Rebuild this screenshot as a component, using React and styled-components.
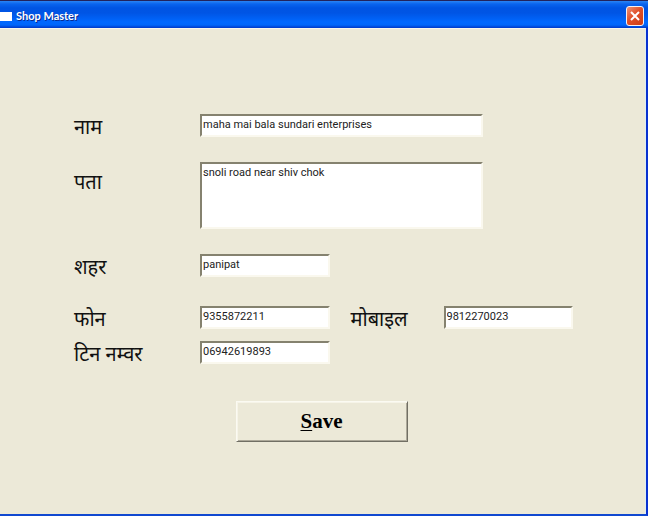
import React from 'react';
import styled, { createGlobalStyle } from 'styled-components';

const GlobalStyle = createGlobalStyle`
  * { box-sizing: border-box; }
  body { margin: 0; background: #ece9d8; }
`;

const Window = styled.div`
  min-height: 100vh;
  display: flex;
  flex-direction: column;
  background: #ece9d8;
  border-right: 2px solid #0831d0;
  border-bottom: 2px solid #1048d0;
`;

const TitleBar = styled.header`
  display: flex;
  align-items: center;
  gap: 4px;
  height: 28px;
  margin-right: -2px;
  padding: 3px 4px 0 0;
  border-top: 1px solid #22225c;
  background: linear-gradient(
    #2a84f4 0,
    #0a64ee 3px,
    #0054e3 7px,
    #0055e5 12px,
    #0068ff 21px,
    #0066fa 24px,
    #0038c8 27px
  );
`;

const WindowIcon = styled.span`
  width: 12px;
  height: 9px;
  background: #fff;
`;

const Title = styled.h1`
  flex: 1;
  margin: 0;
  color: #fff;
  font: bold 11px/16px 'Lato', sans-serif;
  text-shadow: 1px 1px 0 #0a2a90;
`;

const CloseButton = styled.button`
  display: grid;
  place-items: center;
  width: 18px;
  height: 20px;
  padding: 0;
  border: 1px solid #f4f0f4;
  border-radius: 3px;
  background: linear-gradient(135deg, #ee9478, #e0502a 45%, #cc3c14);
`;

const Form = styled.form`
  flex: 1;
  padding: 85px 72px 32px 74px;
  border-top: 1px solid #f8f6ea;
  border-right: 1px solid #dcecf4;
`;

const Fields = styled.div`
  display: grid;
  grid-template-columns: 126px minmax(0, 1fr) 114px minmax(0, 1fr);
  row-gap: 12px;
`;

const Label = styled.label`
  align-self: start;
  height: 23px;
  padding-left: ${(p) => (p.$second ? '21px' : '0')};
  padding-top: ${(p) => (p.$tall ? '12px' : '5px')};
  color: #111;
  font: 20px/20px 'Noto Sans Devanagari', 'Noto Sans', sans-serif;
  white-space: nowrap;
`;

const Spacer = styled.div`
  grid-column: 1 / -1;
  height: ${(p) => (p.$large ? '5px' : '1px')};
`;

const sunken = `
  display: block;
  width: 100%;
  margin: 0;
  border: 2px solid;
  border-color: #85826f #faf8ee #faf8ee #85826f;
  border-radius: 0;
  background: #fff;
  color: #222;
  font: 11px/16px 'Roboto', sans-serif;
  outline: none;
`;

const TextInput = styled.input`
  ${sunken}
  height: 23px;
  padding: 0 1px 2px;
`;

const WideInput = styled(TextInput)`
  grid-column: 2 / -1;
  width: 76%;
`;

const AddressBox = styled.textarea`
  ${sunken}
  grid-column: 2 / -1;
  width: 76%;
  height: 67px;
  padding: 1px;
  resize: none;
`;

const Actions = styled.div`
  display: flex;
  justify-content: center;
  margin-top: 37px;
  padding-right: 4px;
`;

const SaveButton = styled.button`
  width: 172px;
  height: 41px;
  padding: 0 0 2px;
  border: 1px solid;
  border-color: #fbfaf2 #716f64 #716f64 #fbfaf2;
  box-shadow: inset 1px 1px 0 #f6f4e8, inset -1px -1px 0 #aca899;
  background: #ece9d8;
  color: #000;
  font: bold 21px/24px 'Liberation Serif', serif;
`;

const Mnemonic = styled.span`
  text-decoration: underline;
  text-decoration-thickness: 1px;
  text-underline-offset: 2px;
`;

export default function App() {
  return (
    <Window>
      <GlobalStyle />
      <TitleBar>
        <WindowIcon />
        <Title>Shop Master</Title>
        <CloseButton type="button" aria-label="Close">
          <svg width="12" height="12" viewBox="0 0 12 12" aria-hidden="true">
            <path d="M2 2l8 8M10 2l-8 8" stroke="#fff" strokeWidth="2" fill="none" />
          </svg>
        </CloseButton>
      </TitleBar>
      <Form onSubmit={(e) => e.preventDefault()}>
        <Fields>
          <Label htmlFor="name">नाम</Label>
          <WideInput id="name" defaultValue="maha mai bala sundari enterprises" />
          <Spacer />
          <Label htmlFor="address" $tall>पता</Label>
          <AddressBox id="address" defaultValue="snoli road near shiv chok" />
          <Spacer />
          <Label htmlFor="city">शहर</Label>
          <TextInput id="city" defaultValue="panipat" />
          <Spacer $large />
          <Label htmlFor="phone">फोन</Label>
          <TextInput id="phone" defaultValue="9355872211" />
          <Label htmlFor="mobile" $second>मोबाइल</Label>
          <TextInput id="mobile" defaultValue="9812270023" />
          <Label htmlFor="tin">टिन नम्वर</Label>
          <TextInput id="tin" defaultValue="06942619893" />
        </Fields>
        <Actions>
          <SaveButton type="submit"><Mnemonic>S</Mnemonic>ave</SaveButton>
        </Actions>
      </Form>
    </Window>
  );
}
